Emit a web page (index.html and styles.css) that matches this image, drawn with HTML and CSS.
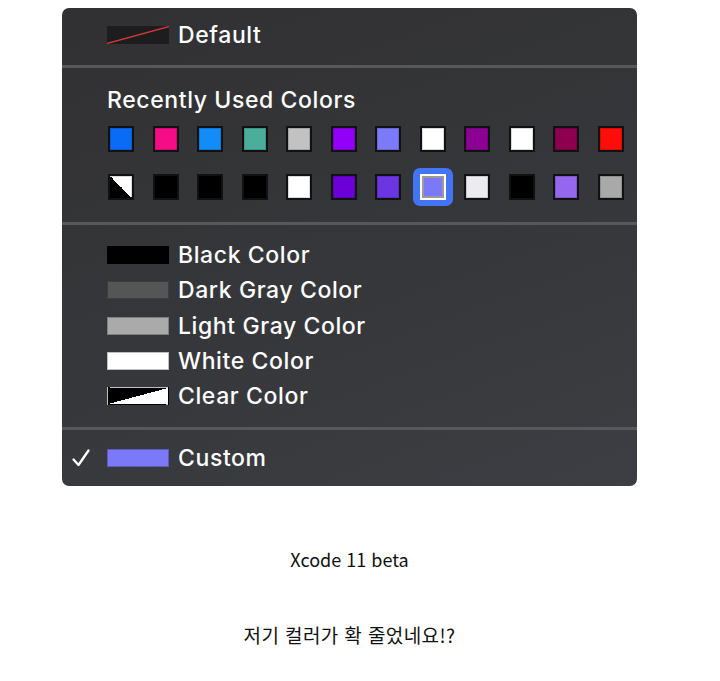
FILE: index.html
```html
<!DOCTYPE html>
<html lang="ko">
<head>
  <meta charset="UTF-8" />
  <meta name="viewport" content="width=device-width, initial-scale=1.0"/>
  <title>Xcode 11 beta</title>
  <link rel="stylesheet" href="styles.css">
</head>
<body>

  <div class="page">

    <div class="menu">

      <div class="menu-row big">
        <span class="bar bar-default">
          <svg width="62" height="18" viewBox="0 0 62 18"><line x1="0" y1="17.5" x2="62" y2="0.5" stroke="#d8383a" stroke-width="1.3"/></svg>
        </span>
        <span class="label">Default</span>
      </div>

      <div class="sep"></div>

      <div class="recent">
        <div class="heading">Recently Used Colors</div>
        <div class="swatches">
          <span class="sw" style="background:#0a6cf6"></span>
          <span class="sw" style="background:#f50c86"></span>
          <span class="sw" style="background:#128cf6"></span>
          <span class="sw" style="background:#4aae9b"></span>
          <span class="sw" style="background:#c2c2c2"></span>
          <span class="sw" style="background:#9200f7"></span>
          <span class="sw" style="background:#7c7af8"></span>
          <span class="sw" style="background:#ffffff"></span>
          <span class="sw" style="background:#8c0093"></span>
          <span class="sw" style="background:#ffffff"></span>
          <span class="sw" style="background:#8e004f"></span>
          <span class="sw" style="background:#ff0d0a"></span>

          <span class="sw half"></span>
          <span class="sw" style="background:#000000"></span>
          <span class="sw" style="background:#000000"></span>
          <span class="sw" style="background:#000000"></span>
          <span class="sw" style="background:#ffffff"></span>
          <span class="sw" style="background:#6b00d9"></span>
          <span class="sw" style="background:#6b35e2"></span>
          <span class="sw-wrap"><span class="sw selected" style="background:#7b79f8"></span></span>
          <span class="sw" style="background:#ececf0"></span>
          <span class="sw" style="background:#000000"></span>
          <span class="sw" style="background:#9467ee"></span>
          <span class="sw" style="background:#a9a9a9"></span>
        </div>
      </div>

      <div class="sep"></div>

      <div class="named">
        <div class="menu-row">
          <span class="bar" style="background:#000"></span>
          <span class="label">Black Color</span>
        </div>
        <div class="menu-row">
          <span class="bar" style="background:#555"></span>
          <span class="label">Dark Gray Color</span>
        </div>
        <div class="menu-row">
          <span class="bar" style="background:#aaa"></span>
          <span class="label">Light Gray Color</span>
        </div>
        <div class="menu-row">
          <span class="bar" style="background:#fff"></span>
          <span class="label">White Color</span>
        </div>
        <div class="menu-row">
          <span class="bar bar-clear"></span>
          <span class="label">Clear Color</span>
        </div>
      </div>

      <div class="sep"></div>

      <div class="menu-row big last">
        <svg class="check" width="20" height="20" viewBox="0 0 20 20"><path d="M2.5 11.5 L7.5 17 L17.5 2.5" fill="none" stroke="#fff" stroke-width="2.3" stroke-linecap="round" stroke-linejoin="round"/></svg>
        <span class="bar" style="background:#7b79f8"></span>
        <span class="label">Custom</span>
      </div>

    </div>

    <p class="caption">Xcode 11 beta</p>
    <p class="caption second">저기 컬러가 확 줄었네요!?</p>

  </div>

</body>
</html>
```

FILE: styles.css
```css
body {
  margin: 0;
  background: white;
  font-family: "Noto Sans CJK KR", "Noto Sans", sans-serif;
}

.page {
  width: 575px;
  margin-left: 62px;
  padding-top: 8px;
}

.menu {
  position: relative;
  border-radius: 7px;
  background: linear-gradient(160deg, #313133 0%, #36373a 55%, #3d3e43 100%);
  color: #fdfdfd;
  font-family: Inter, "Liberation Sans", sans-serif;
  font-weight: 500;
  font-size: 23px;
  overflow: hidden;
}

.sep {
  height: 3px;
  background: #58585b;
  margin-top: 3px;
}

.menu-row {
  display: flex;
  align-items: center;
  height: 35.3px;
  padding-left: 45px;
}

.menu-row.big {
  height: 54px;
  position: relative;
}

.menu-row.last {
  height: 56px;
}

.label {
  margin-left: 9px;
  letter-spacing: 0.6px;
}

.bar {
  display: block;
  width: 62px;
  height: 18px;
  box-sizing: border-box;
  border: 1px solid rgba(0, 0, 0, 0.25);
}

.bar-default {
  background: #1d1d1e;
  border: none;
}

.bar-default svg {
  display: block;
}

.bar-clear {
  background: linear-gradient(to bottom right, #000 0%, #000 50%, #fff 50%, #fff 100%);
}

.check {
  position: absolute;
  left: 9px;
  top: 18px;
}

.recent {
  padding: 19px 13px 0 45px;
}

.heading {
  line-height: 26px;
  letter-spacing: 0.6px;
}

.swatches {
  display: grid;
  grid-template-columns: repeat(12, 26px);
  justify-content: space-between;
  row-gap: 22px;
  width: 516px;
  margin-top: 13px;
  margin-left: 1px;
  margin-bottom: 22px;
}

.sw {
  display: block;
  width: 26px;
  height: 26px;
  box-sizing: border-box;
  border: 2px solid #111;
  box-shadow: inset 0 0 0 1px rgba(0, 0, 0, 0.15);
}

.sw.half {
  background: linear-gradient(to top right, #000 0%, #000 50%, #fff 50%, #fff 100%);
}

.sw-wrap {
  position: relative;
  width: 26px;
  height: 26px;
}

.sw-wrap::before {
  content: "";
  position: absolute;
  left: -7px;
  top: -6px;
  width: 40px;
  height: 38px;
  border-radius: 7px;
  background: #4274f4;
}

.sw.selected {
  position: relative;
  border: 2px solid #fff;
  box-shadow: inset 0 0 0 2px #9a9a9a;
}

.named {
  padding-top: 12.4px;
  padding-bottom: 10.5px;
}

.caption {
  margin: 61px 0 0;
  text-align: center;
  font-size: 18px;
  line-height: 24px;
  color: #111;
}

.caption.second {
  margin-top: 52px;
  font-size: 19px;
  letter-spacing: 0.4px;
}
```
